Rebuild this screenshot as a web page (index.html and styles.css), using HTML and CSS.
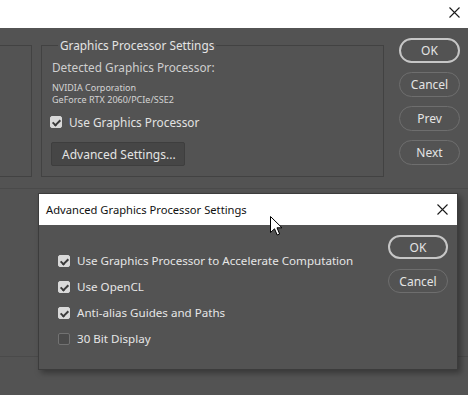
FILE: index.html
```html
<!DOCTYPE html>
<html>
<head>
    <title>Preferences - Performance</title>
    <link rel="stylesheet" href="styles.css">
</head>
<body>
    <div class="window-bar">
        <svg class="close-icon" width="11" height="11" viewBox="0 0 11 11">
            <path d="M0.5 0.5 L10.5 10.5 M10.5 0.5 L0.5 10.5" stroke="#1a1a1a" stroke-width="1.1" fill="none"/>
        </svg>
    </div>

    <div class="main">
        <fieldset class="group side-group"></fieldset>

        <fieldset class="group gpu-group">
            <legend>Graphics Processor Settings</legend>
            <div class="detected">Detected Graphics Processor:</div>
            <div class="gpu-info">
                <div>NVIDIA Corporation</div>
                <div>GeForce RTX 2060/PCIe/SSE2</div>
            </div>
            <label class="check-row">
                <span class="checkbox checked"></span>
                <span>Use Graphics Processor</span>
            </label>
            <button type="button" class="flat-btn">Advanced Settings...</button>
        </fieldset>

        <div class="btn-column">
            <button type="button" class="pill primary">OK</button>
            <button type="button" class="pill">Cancel</button>
            <button type="button" class="pill">Prev</button>
            <button type="button" class="pill">Next</button>
        </div>
    </div>

    <div class="lower-panel"></div>

    <!-- Advanced settings dialog sits on top of the preferences window -->
    <div class="dialog">
        <div class="dialog-title">
            <span>Advanced Graphics Processor Settings</span>
            <svg class="close-icon" width="11" height="11" viewBox="0 0 11 11">
                <path d="M0.5 0.5 L10.5 10.5 M10.5 0.5 L0.5 10.5" stroke="#1a1a1a" stroke-width="1.1" fill="none"/>
            </svg>
        </div>
        <div class="dialog-body">
            <div class="option-list">
                <label class="check-row">
                    <span class="checkbox checked"></span>
                    <span>Use Graphics Processor to Accelerate Computation</span>
                </label>
                <label class="check-row">
                    <span class="checkbox checked"></span>
                    <span>Use OpenCL</span>
                </label>
                <label class="check-row">
                    <span class="checkbox checked"></span>
                    <span>Anti-alias Guides and Paths</span>
                </label>
                <label class="check-row">
                    <span class="checkbox"></span>
                    <span>30 Bit Display</span>
                </label>
            </div>
            <div class="btn-column dialog-btns">
                <button type="button" class="pill primary">OK</button>
                <button type="button" class="pill">Cancel</button>
            </div>
        </div>
    </div>

    <!-- Mouse pointer -->
    <svg class="cursor" width="13" height="20" viewBox="0 0 13 20">
        <path d="M0.5 0.5 L0.5 16.5 L4.5 12.8 L7.2 19 L9.6 18 L7 11.8 L12 11.8 Z" fill="#fff" stroke="#000" stroke-width="1" stroke-linejoin="miter"/>
    </svg>
</body>
</html>
```

FILE: styles.css
```css
/* Global styles */
* {
    margin: 0;
    padding: 0;
    box-sizing: border-box;
}

body {
    width: 468px;
    height: 395px;
    overflow: hidden;
    position: relative;
    background-color: #535353;
    color: #e2e2e2;
    font-family: 'Noto Sans', 'Open Sans', sans-serif;
    font-size: 11.8px;
    line-height: 16px;
}

button {
    font-family: inherit;
    font-size: 12px;
    color: #e4e4e4;
    background: none;
    cursor: pointer;
    outline: none;
}

.window-bar {
    height: 28px;
    background-color: #fff;
    display: flex;
    justify-content: flex-end;
    align-items: flex-start;
    padding: 7px 8px 0 0;
}

/* Preferences panel */
.main {
    display: flex;
    align-items: flex-start;
    padding-top: 9px;
}

.group {
    border: 1px solid #424242;
    height: 140px;
}

.group legend {
    margin-left: 6px;
    padding: 0 2px;
    line-height: 16px;
    color: #e4e4e4;
}

.side-group {
    width: 42px;
    margin-left: -10px;
    margin-top: 8px;
    height: 132px;
}

.gpu-group {
    width: 343px;
    margin-left: 9px;
    padding: 6px 10px 0;
}

.detected {
    color: #cfcfcf;
}

.gpu-info {
    margin-top: 7px;
    font-size: 9px;
    line-height: 12px;
    color: #d4d4d4;
}

.check-row {
    display: flex;
    align-items: center;
    gap: 7px;
    height: 16px;
}

.gpu-group .check-row {
    margin: 8px 0 0 -2px;
}

.checkbox {
    flex-shrink: 0;
    width: 12px;
    height: 12px;
    border-radius: 2px;
    border: 1px solid #727272;
    background-color: #4b4b4b;
    position: relative;
}

.checkbox.checked {
    background-color: #d9d9d9;
    border-color: #d9d9d9;
}

.checkbox.checked::after {
    content: "";
    position: absolute;
    left: 2.5px;
    top: 1px;
    width: 3px;
    height: 6px;
    border-right: 2px solid #3a3a3a;
    border-bottom: 2px solid #3a3a3a;
    transform: rotate(45deg);
}

.flat-btn {
    margin: 12px 0 0 -1px;
    width: 134px;
    height: 24px;
    background-color: #464646;
    border: 1px solid #3e3e3e;
    border-radius: 2px;
    text-align: left;
    padding-left: 10px;
}

.btn-column {
    display: flex;
    flex-direction: column;
    gap: 9px;
    margin: 1px 0 0 15px;
}

.pill {
    width: 61px;
    height: 25px;
    border: 1px solid #6e6e6e;
    border-radius: 13px;
}

.pill.primary {
    border: 2px solid #c6c6c6;
}

.lower-panel {
    margin-top: 11px;
    height: 169px;
    border-top: 1px solid #4a4a4a;
    border-bottom: 1px solid #4a4a4a;
}

/* Advanced dialog */
.dialog {
    position: absolute;
    left: 38px;
    top: 193px;
    width: 420px;
    height: 177px;
    background-color: #535353;
    border: 1px solid #3c3c3c;
    box-shadow: 3px 3px 6px rgba(0, 0, 0, 0.35);
}

.dialog-title {
    height: 31px;
    background-color: #fff;
    color: #111;
    font-size: 11.2px;
    display: flex;
    justify-content: space-between;
    align-items: center;
    padding: 0 9px 0 7px;
}

.dialog-body {
    display: flex;
    align-items: flex-start;
    padding: 10px 9px 0 19px;
}

.option-list {
    display: flex;
    flex-direction: column;
    gap: 10px;
    margin-top: 18px;
}

.option-list .check-row {
    color: #e6e6e6;
    font-size: 11.6px;
}

.dialog-btns {
    margin: 0 0 0 auto;
    gap: 10px;
}

.dialog-btns .pill {
    width: 60px;
    height: 24px;
    border-radius: 12px;
}

.cursor {
    position: absolute;
    left: 270px;
    top: 216px;
}
```
